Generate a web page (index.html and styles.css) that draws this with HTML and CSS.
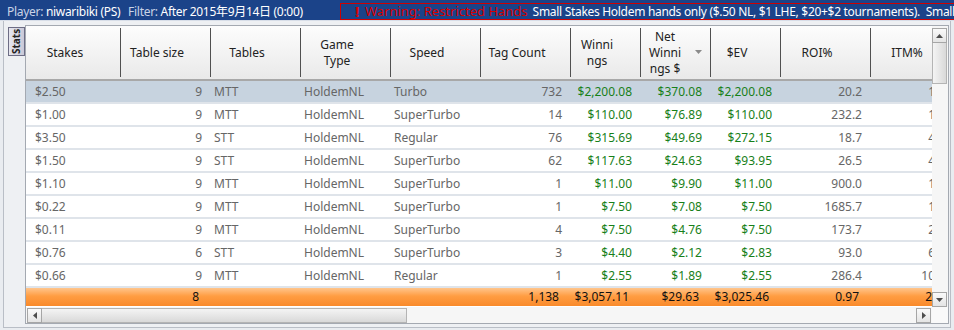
FILE: index.html
```html
<!DOCTYPE html>
<html lang="en">
<head>
    <meta charset="UTF-8">
    <meta name="viewport" content="width=device-width, initial-scale=1.0">
    <title>Stats</title>
    <link rel="stylesheet" href="styles.css">
</head>
<body>
    <div class="topbar">
        <div class="info">
            <span class="lbl">Player:</span> <span class="val">niwaribiki (PS)</span>
            <span class="lbl filter">Filter:</span> <span class="val">After 2015年9月14日 (0:00)</span>
        </div>
        <div class="warning">
            <span class="bang">!</span>
            <span class="warn-title">Warning: Restricted Hands</span>
            <span class="warn-text">Small Stakes Holdem hands only ($.50 NL, $1 LHE, $20+$2 tournaments).&nbsp; Small Stakes Omaha hands only</span>
        </div>
    </div>

    <div class="panel">
        <div class="side">
            <div class="tab">Stats</div>
        </div>

        <div class="grid">
            <div class="viewport">
                <table class="stats">
                    <colgroup>
                        <col class="w94"><col class="w90"><col class="w90"><col class="w90"><col class="w90"><col class="w90">
                        <col class="w70"><col class="w70"><col class="w70"><col class="w90"><col class="w90">
                    </colgroup>
                    <thead>
                        <tr>
                            <th class="first">Stakes</th>
                            <th>Table size</th>
                            <th>Tables</th>
                            <th>Game<br>Type</th>
                            <th>Speed</th>
                            <th>Tag Count</th>
                            <th>Winni<br>ngs</th>
                            <th class="sorted">Net<br>Winni<br>ngs $
                                <svg class="sort" width="7" height="4" viewBox="0 0 7 4"><polygon points="0,0 7,0 3.5,4" fill="#8a8a8a"/></svg>
                            </th>
                            <th>$EV</th>
                            <th>ROI%</th>
                            <th>ITM%</th>
                        </tr>
                    </thead>
                    <tbody>
                        <tr class="selected">
                            <td class="first">$2.50</td><td class="num">9</td><td>MTT</td><td>HoldemNL</td><td>Turbo</td>
                            <td class="num">732</td><td class="num pos">$2,200.08</td><td class="num pos">$370.08</td><td class="num pos">$2,200.08</td>
                            <td class="num">20.2</td><td class="num">16.7</td>
                        </tr>
                        <tr>
                            <td class="first">$1.00</td><td class="num">9</td><td>MTT</td><td>HoldemNL</td><td>SuperTurbo</td>
                            <td class="num">14</td><td class="num pos">$110.00</td><td class="num pos">$76.89</td><td class="num pos">$110.00</td>
                            <td class="num">232.2</td><td class="num">14.3</td>
                        </tr>
                        <tr>
                            <td class="first">$3.50</td><td class="num">9</td><td>STT</td><td>HoldemNL</td><td>Regular</td>
                            <td class="num">76</td><td class="num pos">$315.69</td><td class="num pos">$49.69</td><td class="num pos">$272.15</td>
                            <td class="num">18.7</td><td class="num">47.4</td>
                        </tr>
                        <tr>
                            <td class="first">$1.50</td><td class="num">9</td><td>STT</td><td>HoldemNL</td><td>SuperTurbo</td>
                            <td class="num">62</td><td class="num pos">$117.63</td><td class="num pos">$24.63</td><td class="num pos">$93.95</td>
                            <td class="num">26.5</td><td class="num">41.9</td>
                        </tr>
                        <tr>
                            <td class="first">$1.10</td><td class="num">9</td><td>MTT</td><td>HoldemNL</td><td>SuperTurbo</td>
                            <td class="num">1</td><td class="num pos">$11.00</td><td class="num pos">$9.90</td><td class="num pos">$11.00</td>
                            <td class="num">900.0</td><td class="num">10.0</td>
                        </tr>
                        <tr>
                            <td class="first">$0.22</td><td class="num">9</td><td>MTT</td><td>HoldemNL</td><td>SuperTurbo</td>
                            <td class="num">1</td><td class="num pos">$7.50</td><td class="num pos">$7.08</td><td class="num pos">$7.50</td>
                            <td class="num">1685.7</td><td class="num">10.0</td>
                        </tr>
                        <tr>
                            <td class="first">$0.11</td><td class="num">9</td><td>MTT</td><td>HoldemNL</td><td>SuperTurbo</td>
                            <td class="num">4</td><td class="num pos">$7.50</td><td class="num pos">$4.76</td><td class="num pos">$7.50</td>
                            <td class="num">173.7</td><td class="num">25.0</td>
                        </tr>
                        <tr>
                            <td class="first">$0.76</td><td class="num">6</td><td>STT</td><td>HoldemNL</td><td>SuperTurbo</td>
                            <td class="num">3</td><td class="num pos">$4.40</td><td class="num pos">$2.12</td><td class="num pos">$2.83</td>
                            <td class="num">93.0</td><td class="num">66.7</td>
                        </tr>
                        <tr>
                            <td class="first">$0.66</td><td class="num">9</td><td>MTT</td><td>HoldemNL</td><td>Regular</td>
                            <td class="num">1</td><td class="num pos">$2.55</td><td class="num pos">$1.89</td><td class="num pos">$2.55</td>
                            <td class="num">286.4</td><td class="num">100.0</td>
                        </tr>
                    </tbody>
                    <tfoot>
                        <tr>
                            <td></td><td class="num">8</td><td></td><td></td><td></td>
                            <td class="num">1,138</td><td class="num">$3,057.11</td><td class="num">$29.63</td><td class="num">$3,025.46</td>
                            <td class="num">0.97</td><td class="num">21.3</td>
                        </tr>
                    </tfoot>
                </table>
            </div>

            <div class="vscroll">
                <div class="sbtn"><svg width="7" height="4" viewBox="0 0 7 4"><polygon points="3.5,0 7,4 0,4" fill="#4d4d4d"/></svg></div>
                <div class="vthumb"></div>
                <div class="spacer"></div>
                <div class="sbtn"><svg width="7" height="4" viewBox="0 0 7 4"><polygon points="0,0 7,0 3.5,4" fill="#4d4d4d"/></svg></div>
            </div>

            <div class="hscroll">
                <div class="sbtn"><svg width="4" height="7" viewBox="0 0 4 7"><polygon points="4,0 4,7 0,3.5" fill="#4d4d4d"/></svg></div>
                <div class="hthumb"></div>
                <div class="spacer"></div>
                <div class="sbtn"><svg width="4" height="7" viewBox="0 0 4 7"><polygon points="0,0 4,3.5 0,7" fill="#4d4d4d"/></svg></div>
            </div>

            <div class="corner"></div>
        </div>
    </div>
</body>
</html>
```

FILE: styles.css
```css
/* grille de stats */
* {
    box-sizing: border-box;
}

body {
    margin: 0;
    background-color: #e9ecf0;
    font-family: "Noto Sans", "Noto Sans CJK JP", sans-serif;
    font-size: 12px;
    overflow: hidden;
}

/* barre du haut */
.topbar {
    display: flex;
    height: 21px;
    padding-top: 3px;
    background-color: #1b4389;
    border-bottom: 1px solid #d8dee8;
    white-space: nowrap;
    overflow: hidden;
    letter-spacing: -0.3px;
}

.info {
    flex: none;
    width: 340px;
    padding-left: 7px;
    line-height: 17px;
    color: #fff;
}

.info .lbl {
    color: #c9d3e6;
}

.info .filter {
    margin-left: 5px;
}

.warning {
    flex: none;
    display: flex;
    align-items: center;
    height: 17px;
    padding-left: 14px;
    border: 1px solid #d00000;
    border-right: none;
    line-height: 15px;
}

.bang {
    color: #e00000;
    font-weight: bold;
    font-size: 15px;
    margin-right: 6px;
}

.warn-title {
    color: #d80000;
    font-size: 13px;
    letter-spacing: 0;
    margin-right: 5px;
}

.warn-text {
    color: #fff;
}

/* panneau */
.panel {
    display: flex;
    height: 307px;
    margin: 0 3px;
    padding: 4px 1px 3px 0;
    border: 1px solid #b9bec6;
    border-top: none;
    background-color: #eef0f3;
}

.side {
    flex: none;
    width: 21px;
    padding: 2px 0 0 4px;
}

.tab {
    writing-mode: vertical-rl;
    transform: rotate(180deg);
    width: 17px;
    height: 29px;
    text-align: center;
    line-height: 15px;
    font-size: 10px;
    font-weight: bold;
    color: #222;
    background: linear-gradient(to left, #e6e6ee, #c9c9d8);
    border: 1px solid #6d6d85;
}

.grid {
    flex: 1;
    display: grid;
    grid-template-columns: 1fr 16px;
    grid-template-rows: 1fr 16px;
    border: 1px solid #a4a9b1;
    background-color: #fff;
}

.viewport {
    overflow: hidden;
}

/* tableau */
.stats {
    table-layout: fixed;
    width: 934px;
    border-collapse: separate;
    border-spacing: 0;
    white-space: nowrap;
}

.w94 { width: 94px; }
.w90 { width: 90px; }
.w70 { width: 70px; }

.stats th {
    position: relative;
    height: 55px;
    padding: 0 18px 0 2px;
    font-weight: normal;
    color: #222;
    line-height: 16px;
    text-align: center;
    vertical-align: middle;
    border-bottom: 2px solid #a8a8a8;
    background:
        linear-gradient(#505050, #505050) left center / 1px 49px no-repeat,
        linear-gradient(#fdfdfd, #e9e9e9);
}

.stats th.first {
    background: linear-gradient(#fdfdfd, #e9e9e9);
}

.stats th.sorted {
    padding-right: 22px;
}

.sort {
    position: absolute;
    right: 8px;
    top: 24px;
}

.stats td {
    height: 23px;
    padding: 0 8px 0 4px;
    line-height: 21px;
    color: #666;
    overflow: hidden;
    border-bottom: 2px solid #dfe4ea;
}

.stats td.first {
    padding-left: 9px;
}

.stats td.num {
    text-align: right;
}

.stats td.pos {
    color: #178019;
}

.stats tr.selected td {
    background-color: #c7d3df;
}

.stats tfoot td {
    height: 18px;
    line-height: 18px;
    color: #111;
    border-bottom: none;
    padding-right: 11px;
    background: linear-gradient(#ffc58c, #ff9d42 45%, #f98a2b);
}

/* barres de défilement */
.vscroll {
    display: flex;
    flex-direction: column;
    padding: 2px 1px 0 0;
    background-color: #f6f6f6;
}

.hscroll {
    display: flex;
    padding: 1px 0 0 1px;
    background-color: #f6f6f6;
}

.corner {
    background-color: #f9f9f9;
}

.spacer {
    flex: 1;
}

.sbtn {
    flex: none;
    width: 15px;
    height: 15px;
    display: flex;
    align-items: center;
    justify-content: center;
    border: 1px solid #a6a6a6;
    background: linear-gradient(#fafafa, #e4e4e4);
}

.vthumb {
    flex: none;
    height: 41px;
    border: 1px solid #b4b4b4;
    border-top: none;
    background: linear-gradient(to right, #f4f4f4, #d9d9d9);
}

.hthumb {
    flex: none;
    width: 365px;
    height: 15px;
    border: 1px solid #b4b4b4;
    border-left: none;
    background: linear-gradient(#f4f4f4, #d9d9d9);
}

.hscroll .sbtn:last-child {
    margin-right: 1px;
}
```
